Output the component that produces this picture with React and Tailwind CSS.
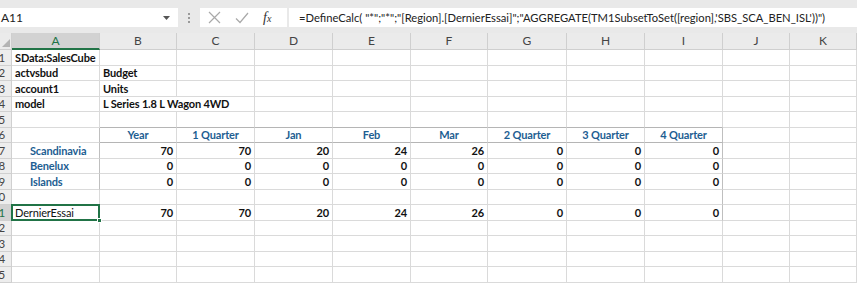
import React from "react";

const COLS = "grid grid-cols-[12px_88px_77px_78px_78px_78px_77px_79px_78px_78px_67px_67px]";
const LETTERS = ["A", "B", "C", "D", "E", "F", "G", "H", "I", "J", "K"];
const QUARTERS = ["Year", "1 Quarter", "Jan", "Feb", "Mar", "2 Quarter", "3 Quarter", "4 Quarter"];
const FIRST = [70, 70, 20, 24, 26, 0, 0, 0];
const ZEROS = [0, 0, 0, 0, 0, 0, 0, 0];

const rows = [
  { a: "SData:SalesCube", bold: true },
  { a: "actvsbud", b: "Budget" },
  { a: "account1", b: "Units" },
  { a: "model", b: "L Series 1.8 L Wagon 4WD", wide: true },
  {},
  { heads: QUARTERS },
  { a: "Scandinavia", blue: true, nums: FIRST },
  { a: "Benelux", blue: true, nums: ZEROS },
  { a: "Islands", blue: true, nums: ZEROS },
  {},
  { a: "DernierEssai", selected: true, nums: FIRST },
  {},
  {},
  {},
  {},
];

function Cell({ className = "", children }) {
  return (
    <div
      className={
        "h-full border-r border-b border-[#dadada] flex items-center px-[3px] overflow-hidden whitespace-nowrap " +
        className
      }
    >
      {children}
    </div>
  );
}

function Row({ row, n }) {
  const inTable = n >= 6 && n <= 11;
  const cells = [];
  // column A
  if (row.selected) {
    cells.push(
      <div key="a" className="h-full relative border-r border-b border-[#dadada]">
        <div className="absolute -top-px -left-px right-[-1px] bottom-[-1px] border-2 border-[#217346] flex items-center pl-[2px] text-[#111]">
          {row.a}
        </div>
        <div className="absolute right-[-3px] bottom-[-3px] w-[5px] h-[5px] bg-[#217346] border border-white" />
      </div>
    );
  } else {
    cells.push(
      <Cell
        key="a"
        className={
          (row.blue ? "pl-[18px] text-[#1d5e92] font-bold " : row.a ? "font-bold text-[#111] overflow-visible " : "") +
          (n >= 6 && n <= 9 ? "border-r-[#bfbfbf]" : "")
        }
      >
        {row.a}
      </Cell>
    );
  }

  // columns B..I
  for (let i = 0; i < 8; i++) {
    let content = null;
    let cls = "";
    if (row.heads) {
      content = row.heads[i];
      cls = "justify-center font-bold text-[#1d5e92] border-b-[#b5b5b5]";
    } else if (row.nums) {
      content = row.nums[i];
      cls = "justify-end font-bold text-[#111]";
    } else if (i === 0 && row.b) {
      content = row.b;
      cls = "font-bold text-[#111] overflow-visible";
    }
    if (n === 5) cls += " border-b-[#b5b5b5]";
    if (i === 7 && inTable) cls += " border-r-[#bfbfbf]";
    if (row.wide && i === 0) {
      cells.push(
        <Cell key={"c" + i} className={cls + " col-span-2"}>
          {content}
        </Cell>
      );
      i++;
      continue;
    }
    cells.push(
      <Cell key={"c" + i} className={cls}>
        {content}
      </Cell>
    );
  }
  cells.push(<Cell key="j" />);
  cells.push(<Cell key="k" />);

  return (
    <div className={COLS + " h-[15.5px]"}>
      <div
        className={
          "h-full overflow-hidden flex items-center justify-end pr-[6px] border-r border-b border-[#d0d0d0] text-[#444] text-[11.5px] " +
          (row.selected ? "bg-[#d2d2d2] text-[#217346]" : "bg-[#ededed]")
        }
      >
        {n}
      </div>
      {cells}
    </div>
  );
}

export default function App() {
  return (
    <div
      className="w-[857px] h-[285px] overflow-hidden bg-white text-[11px] tracking-[-0.15px] leading-none"
      style={{ fontFamily: "Lato, 'Open Sans', sans-serif" }}
    >
      {/* formula bar */}
      <div className="h-[33px] bg-[#e9e9e9] flex items-start pt-[8px] tracking-normal">
        <div className="w-[178px] h-[19px] bg-white flex items-center justify-between pl-[1px] pr-[8px] text-[12px] text-[#222]">
          <span>A11</span>
          <svg width="7" height="4" viewBox="0 0 7 4">
            <path d="M0 0h7L3.5 4z" fill="#555" />
          </svg>
        </div>
        <div className="w-[22px] h-[19px] flex flex-col items-center justify-center gap-[2px]">
          <div className="w-[2px] h-[2px] bg-[#9a9a9a]" />
          <div className="w-[2px] h-[2px] bg-[#9a9a9a]" />
          <div className="w-[2px] h-[2px] bg-[#9a9a9a]" />
        </div>
        <div className="w-[87px] h-[19px] bg-white flex items-center pl-[8px] gap-[14px]">
          <svg width="13" height="13" viewBox="0 0 13 13">
            <path d="M1 1l11 11M12 1L1 12" stroke="#a9a9a9" strokeWidth="1.2" fill="none" />
          </svg>
          <svg width="14" height="12" viewBox="0 0 14 12">
            <path d="M1 6.5l4 4L13 1" stroke="#a9a9a9" strokeWidth="1.2" fill="none" />
          </svg>
          <span className="italic text-[14px] text-[#333]" style={{ fontFamily: "'Liberation Serif', serif" }}>
            f<span className="text-[10px]">x</span>
          </span>
        </div>
        <div className="ml-[2px] flex-1 h-[19px] bg-white flex items-center pl-[10px] text-[11.2px] text-[#222] whitespace-nowrap">
          =DefineCalc( "*";"*";"[Region].[DernierEssai]";"AGGREGATE(TM1SubsetToSet([region],'SBS_SCA_BEN_ISL'))")
        </div>
      </div>

      {/* column headers */}
      <div className={COLS + " h-[17px] bg-[#ebebeb] text-[12px] text-[#444] tracking-normal"}>
        <div className="h-full relative border-r border-b border-[#cfcfcf]">
          <svg className="absolute right-[1px] bottom-[2px]" width="8" height="8" viewBox="0 0 8 8">
            <path d="M8 0v8H0z" fill="#b4b4b4" />
          </svg>
        </div>
        {LETTERS.map((l) => (
          <div
            key={l}
            className={
              "h-full flex items-center justify-center border-r border-[#cfcfcf] " +
              (l === "A"
                ? "bg-[#d2d2d2] text-[#217346] border-b-2 border-b-[#217346]"
                : "border-b")
            }
          >
            {l}
          </div>
        ))}
      </div>

      {rows.map((row, i) => (
        <Row key={i} row={row} n={i + 1} />
      ))}
    </div>
  );
}
